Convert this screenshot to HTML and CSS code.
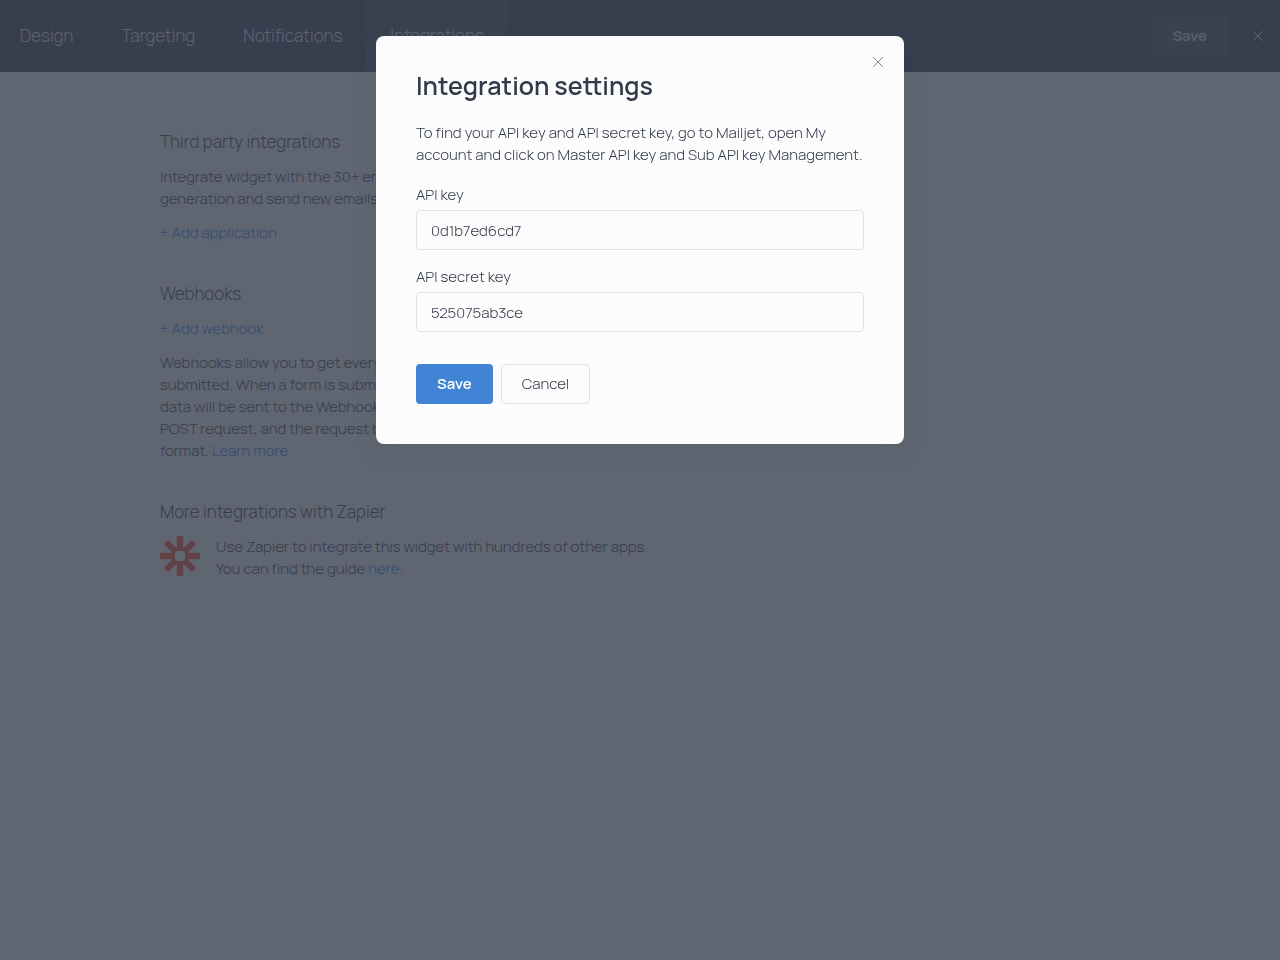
FILE: index.html
```
<!DOCTYPE html>
<html lang="en">
  <head>
    <meta charset="UTF-8" />
    <meta name="viewport" content="width=device-width, initial-scale=1.0" />
    <title>Integrations</title>
    <link rel="stylesheet" href="styles.css">
  </head>
  <body>
    <header class="header">
      <nav class="tabs">
        <a class="tab" href="#design">Design</a>
        <a class="tab" href="#targeting">Targeting</a>
        <a class="tab" href="#notifications">Notifications</a>
        <a class="tab active" href="#integrations">Integrations</a>
      </nav>
      <div class="header-actions">
        <button class="btn btn-header" type="button">Save</button>
        <button class="close" type="button" aria-label="Close editor">
          <svg width="12" height="12" viewBox="0 0 12 12"><path d="M1 1l10 10M11 1L1 11" /></svg>
        </button>
      </div>
    </header>

    <main class="content">
      <section class="section">
        <h2>Third party integrations</h2>
        <p>Integrate widget with the 30+ em<br />generation and send new emails</p>
        <p><a href="#add-application">+ Add application</a></p>
      </section>
      <section class="section">
        <h2>Webhooks</h2>
        <p><a href="#add-webhook">+ Add webhook</a></p>
        <p>
          Webhooks allow you to get every<br />
          submitted. When a form is subm<br />
          data will be sent to the Webhook<br />
          POST request, and the request b<br />
          format. <a href="#learn-more">Learn more</a>
        </p>
      </section>
      <section class="section">
        <h2>More integrations with Zapier</h2>
        <div class="zapier">
          <svg class="zapier-logo" width="40" height="40" viewBox="0 0 40 40">
            <path d="M20 0v40M0 20h40M6 6l28 28M34 6L6 34" />
            <rect x="15" y="15" width="10" height="10" rx="3" />
          </svg>
          <p>
            Use Zapier to integrate this widget with hundreds of other apps.<br />
            You can find the guide <a href="#guide">here</a>.
          </p>
        </div>
      </section>
    </main>

    <div class="overlay">
      <form class="modal" role="dialog" aria-labelledby="modal-title">
        <button class="close modal-close" type="button" aria-label="Close">
          <svg width="12" height="12" viewBox="0 0 12 12"><path d="M1 1l10 10M11 1L1 11" /></svg>
        </button>
        <h1 id="modal-title">Integration settings</h1>
        <p>To find your API key and API secret key, go to Mailjet, open My account and click on Master API key and Sub API key Management.</p>
        <div class="field">
          <label for="api-key">API key</label>
          <input id="api-key" type="text" value="0d1b7ed6cd7" />
        </div>
        <div class="field">
          <label for="api-secret">API secret key</label>
          <input id="api-secret" type="text" value="525075ab3ce" />
        </div>
        <div class="buttons">
          <button class="btn btn-primary" type="button">Save</button>
          <button class="btn btn-default" type="button">Cancel</button>
        </div>
      </form>
    </div>
  </body>
</html>
```

FILE: styles.css
```
* {
  box-sizing: border-box;
}
body {
  margin: 0;
  background: #fff;
  color: #323a4b;
  font-family: Manrope, Inter, "Liberation Sans", sans-serif;
  font-size: 15px;
  font-weight: 300;
  line-height: 22px;
}
h1,
h2,
p {
  margin: 0;
}
a {
  color: #1f80f5;
  text-decoration: none;
}
button,
input {
  font: inherit;
  color: inherit;
}
button {
  cursor: pointer;
}

.header {
  display: flex;
  justify-content: space-between;
  height: 72px;
  background: #373c4c;
}
.tabs {
  display: flex;
}
.tab {
  padding: 0 24px;
  color: #f0f1f3;
  font-size: 17px;
  line-height: 72px;
}
.tab:first-child {
  padding-left: 20px;
}
.tab.active {
  background: #494f60;
}
.header-actions {
  display: flex;
  align-items: center;
  gap: 16px;
  padding-right: 8px;
}

.btn {
  height: 40px;
  padding: 0 20px;
  border: 1px solid transparent;
  border-radius: 4px;
}
.btn-header {
  background: #494f60;
  color: #e0e2e6;
  font-weight: 600;
}
.btn-primary {
  background: #4183d4;
  color: #fff;
  font-weight: 600;
}
.btn-default {
  border-color: #dce3ed;
  background: #fcfcfc;
}
.close {
  display: flex;
  padding: 8px;
  border: 0;
  background: none;
}
.close svg {
  fill: none;
  stroke: #858b98;
}
.header .close svg {
  stroke: #fff;
}

.content {
  max-width: 960px;
  margin: 0 auto;
  padding: 58px 0;
}
.section {
  display: flex;
  flex-direction: column;
  gap: 12px;
  margin-bottom: 38px;
}
.section h2 {
  font-size: 17px;
  font-weight: 300;
  line-height: 24px;
}
.zapier {
  display: flex;
  gap: 16px;
}
.zapier-logo path {
  stroke: #ff4a2c;
  stroke-width: 6.6;
}
.zapier-logo rect {
  fill: #fff;
}

.overlay {
  position: fixed;
  inset: 0;
  padding: 36px 16px;
  background: rgba(55, 62, 77, 0.8);
}
.modal {
  position: relative;
  max-width: 528px;
  margin: 0 auto;
  padding: 32px 40px 40px;
  border-radius: 8px;
  background: #fcfcfc;
  box-shadow: 0 8px 24px rgba(55, 62, 77, 0.1);
}
.modal-close {
  position: absolute;
  top: 12px;
  right: 12px;
}
.modal h1 {
  margin-bottom: 18px;
  font-size: 25px;
  font-weight: 600;
  line-height: 36px;
}
.field {
  display: flex;
  flex-direction: column;
  gap: 4px;
  margin-top: 16px;
}
.modal p + .field {
  margin-top: 18px;
}
.field input {
  width: 100%;
  height: 40px;
  padding: 0 14px;
  border: 1px solid #dce3ed;
  border-radius: 4px;
  background: #fcfcfc;
}
.buttons {
  display: flex;
  gap: 8px;
  margin-top: 32px;
}
```
